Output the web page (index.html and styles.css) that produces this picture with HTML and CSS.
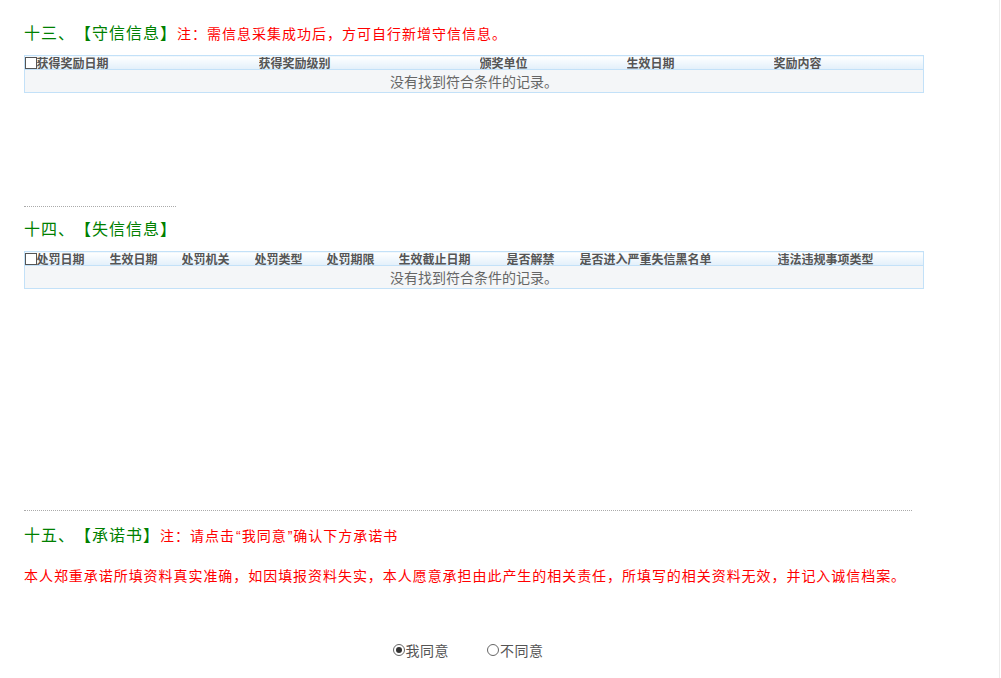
FILE: index.html
```html
<!DOCTYPE html>
<html lang="zh-CN">
<head>
    <meta charset="UTF-8">
    <title>信用信息</title>
    <link rel="stylesheet" href="styles.css">
</head>
<body>
<div class="page">
    <div class="section-title">
        <span class="title-main">十三、【守信信息】</span><span class="title-note">注：需信息采集成功后，方可自行新增守信信息。</span>
    </div>
    <table class="grid grid-award">
        <colgroup>
            <col style="width:12px">
            <col style="width:222px">
            <col style="width:221px">
            <col style="width:147px">
            <col style="width:147px">
            <col>
        </colgroup>
        <thead>
        <tr>
            <th><span class="chk"></span></th>
            <th>获得奖励日期</th>
            <th>获得奖励级别</th>
            <th>颁奖单位</th>
            <th>生效日期</th>
            <th>奖励内容</th>
        </tr>
        </thead>
        <tbody>
        <tr><td colspan="6" class="empty">没有找到符合条件的记录。</td></tr>
        </tbody>
    </table>

    <div class="divider divider-short"></div>

    <div class="section-title">
        <span class="title-main">十四、【失信信息】</span>
    </div>
    <table class="grid grid-punish">
        <colgroup>
            <col style="width:12px">
            <col style="width:73px">
            <col style="width:72px">
            <col style="width:73px">
            <col style="width:72px">
            <col style="width:72px">
            <col style="width:108px">
            <col style="width:73px">
            <col style="width:198px">
            <col>
        </colgroup>
        <thead>
        <tr>
            <th><span class="chk"></span></th>
            <th>处罚日期</th>
            <th>生效日期</th>
            <th>处罚机关</th>
            <th>处罚类型</th>
            <th>处罚期限</th>
            <th>生效截止日期</th>
            <th>是否解禁</th>
            <th>是否进入严重失信黑名单</th>
            <th>违法违规事项类型</th>
        </tr>
        </thead>
        <tbody>
        <tr><td colspan="10" class="empty">没有找到符合条件的记录。</td></tr>
        </tbody>
    </table>

    <div class="divider divider-long"></div>

    <div class="section-title">
        <span class="title-main">十五、【承诺书】</span><span class="title-note">注：请点击<span class="quote">“</span>我同意<span class="quote">”</span>确认下方承诺书</span>
    </div>
    <p class="promise">本人郑重承诺所填资料真实准确，如因填报资料失实，本人愿意承担由此产生的相关责任，所填写的相关资料无效，并记入诚信档案。</p>

    <div class="agree">
        <label class="radio"><span class="dot checked"></span>我同意</label>
        <label class="radio"><span class="dot"></span>不同意</label>
    </div>
</div>
</body>
</html>
```

FILE: styles.css
```css
html, body {
    margin: 0;
    padding: 0;
    background: #fff;
}
.page {
    width: 1000px;
    min-height: 678px;
    box-sizing: border-box;
    border-right: 1px solid #ececec;
    padding: 22px 0 0 24px;
    font-family: "Microsoft YaHei", "Noto Sans CJK SC", sans-serif;
    text-spacing-trim: space-all;
}
.section-title {
    line-height: 20px;
    height: 20px;
    white-space: nowrap;
}
.title-main {
    color: #008000;
    font-size: 16px;
    letter-spacing: 1px;
}
.title-note {
    color: #ff0000;
    font-size: 14px;
    letter-spacing: 1px;
}
.quote {
    font-family: "Liberation Sans", sans-serif;
    letter-spacing: 0;
    margin: 0 1px;
}
.grid {
    width: 900px;
    margin-top: 13px;
    border-collapse: collapse;
    table-layout: fixed;
    border: 1px solid #c3e1f8;
}
.grid th {
    height: 13px;
    padding: 0;
    font-size: 12px;
    line-height: 13px;
    font-weight: bold;
    color: #555;
    text-align: left;
    white-space: nowrap;
    overflow: hidden;
    background: linear-gradient(#ffffff, #e2effa);
    border-bottom: 1px solid #c3e1f8;
}
.chk {
    display: block;
    width: 10px;
    height: 10px;
    border: 1px solid #555;
    background: #fff;
}
.grid td.empty {
    height: 22px;
    padding: 0;
    text-align: center;
    font-size: 14px;
    color: #666;
    background: #f4f6f8;
}
.divider {
    border-top: 1px dotted #aaa;
    height: 0;
}
.divider-short {
    width: 152px;
    margin-top: 113px;
    margin-bottom: 11px;
}
.divider-long {
    width: 888px;
    margin-top: 221px;
    margin-bottom: 13px;
}
.promise {
    margin: 21px 0 0;
    color: #ff0000;
    font-size: 14px;
    line-height: 20px;
    letter-spacing: 0.95px;
    white-space: nowrap;
}
.agree {
    width: 888px;
    margin-top: 55px;
    display: flex;
    justify-content: center;
    gap: 38px;
    line-height: 20px;
    font-size: 14px;
    color: #555;
}
.radio {
    display: flex;
    align-items: center;
    letter-spacing: 0.5px;
}
.dot {
    width: 10px;
    height: 10px;
    border: 1px solid #666;
    border-radius: 50%;
    margin-right: 1px;
    position: relative;
    background: #fff;
}
.dot.checked::after {
    content: "";
    position: absolute;
    left: 2px;
    top: 2px;
    width: 6px;
    height: 6px;
    border-radius: 50%;
    background: #333;
}
```
